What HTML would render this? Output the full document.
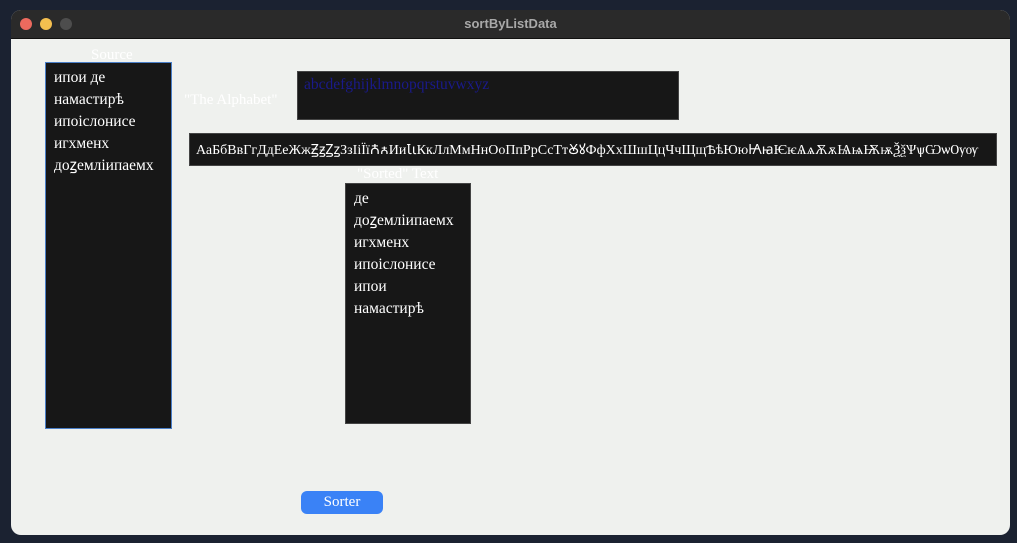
<!DOCTYPE html>
<html><head><style>
body{margin:0;width:1017px;height:543px;background:#1b2231;position:relative;overflow:hidden;font-family:"Liberation Serif",serif}
.win{position:absolute;left:11px;top:10px;width:999px;height:525px;background:#eff1ee;border-radius:10px;overflow:hidden}
.tb{position:absolute;left:0;top:0;width:100%;height:28px;background:#2a2a2a;border-bottom:1px solid #111}
.tb .t{position:absolute;width:100%;text-align:center;top:6px;font:bold 13px "Liberation Sans",sans-serif;color:#a8a8a8}
.d{position:absolute;top:8px;width:12px;height:12px;border-radius:50%}
.box{position:absolute;background:#171717;border:1px solid #444;box-sizing:border-box;color:#fff}
.lbl{position:absolute;color:#fff;font-size:15px}
.ls{padding:4px 0 0 8px;font-size:15.5px;line-height:22px;white-space:nowrap}
</style></head><body>
<div class="win">
<div class="tb"><div class="d" style="left:9px;background:#ec6a5e"></div><div class="d" style="left:29px;background:#f4bf4f"></div><div class="d" style="left:49px;background:#4d4d4d"></div><div class="t">sortByListData</div></div>
</div>
<div class="lbl" style="left:91px;top:47px">Source</div>
<div class="box ls" style="left:45px;top:62px;width:127px;height:367px;border-color:#4a7fc8">ипои де<br>намастирѣ<br>ипоіслонисе<br>игхменх<br>доꙁемліипаемх</div>
<div class="lbl" style="left:184px;top:92px">"The Alphabet"</div>
<div class="box" style="left:297px;top:71px;width:382px;height:49px;color:#1a1a8a;font-size:15.5px;padding:4px 0 0 6px">abcdefghijklmnopqrstuvwxyz</div>
<div class="box" style="left:189px;top:133px;width:808px;height:33px;font-size:14px;padding:6px 0 0 6px;white-space:nowrap;overflow:hidden">АаБбВвГгДдЕеЖжꙂꙃꙀꙁЗзІіЇїꙈꙉИиꙆꙇКкЛлМмНнОоПпРрСсТтꙊꙋФфХхШшЦцЧчЩщѢѣЮюꙖꙗѤѥѦѧѪѫѨѩѬѭѮѯѰѱѠѡѸѹ</div>
<div class="lbl" style="left:357px;top:166px">"Sorted" Text</div>
<div class="box ls" style="left:345px;top:183px;width:126px;height:241px">де<br>доꙁемліипаемх<br>игхменх<br>ипоіслонисе<br>ипои<br>намастирѣ</div>
<div style="position:absolute;left:301px;top:491px;width:82px;height:23px;background:#3a82f6;border-radius:6px;color:#fff;font-size:15px;text-align:center;line-height:22px">Sorter</div>
</body></html>
